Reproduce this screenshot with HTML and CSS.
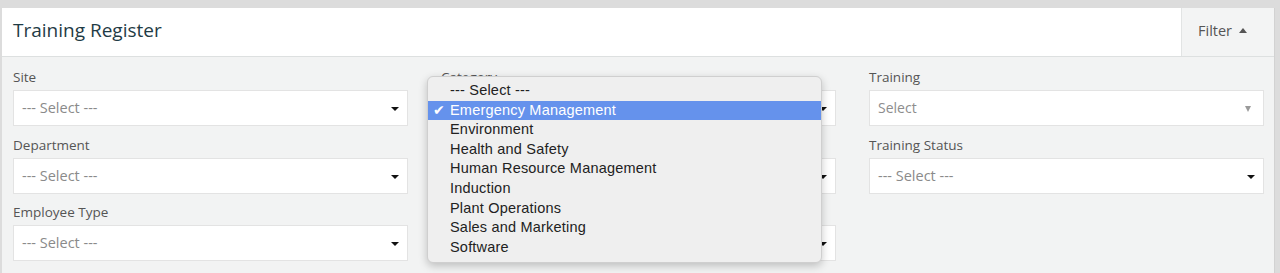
FILE: index.html
```html
<!DOCTYPE html>
<html lang="en">
<head>
    <meta charset="UTF-8">
    <title>Training Register</title>
    <link rel="stylesheet" href="styles.css">
</head>
<body>
    <div class="panel">
        <div class="panel-header">
            <h1>Training Register</h1>
            <button class="filter-toggle">Filter <span class="caret-up"></span></button>
        </div>

        <div class="panel-body">
            <div class="filter-col">
                <div class="field">
                    <label>Site</label>
                    <div class="select">--- Select ---<span class="caret"></span></div>
                </div>
                <div class="field">
                    <label>Department</label>
                    <div class="select">--- Select ---<span class="caret"></span></div>
                </div>
                <div class="field">
                    <label>Employee Type</label>
                    <div class="select">--- Select ---<span class="caret"></span></div>
                </div>
            </div>

            <div class="filter-col category-col">
                <div class="field">
                    <label>Category</label>
                    <div class="select"><span class="covered">Emergency Management</span><span class="caret"></span></div>
                </div>
                <div class="field">
                    <label class="covered">Trainer</label>
                    <div class="select"><span class="covered">--- Select ---</span><span class="caret"></span></div>
                </div>
                <div class="field">
                    <label class="covered">Provider</label>
                    <div class="select"><span class="covered">--- Select ---</span><span class="caret"></span></div>
                </div>

                <ul class="native-menu">
                    <li>--- Select ---</li>
                    <li class="checked">Emergency Management</li>
                    <li>Environment</li>
                    <li>Health and Safety</li>
                    <li>Human Resource Management</li>
                    <li>Induction</li>
                    <li>Plant Operations</li>
                    <li>Sales and Marketing</li>
                    <li>Software</li>
                </ul>
            </div>

            <div class="filter-col">
                <div class="field">
                    <label>Training</label>
                    <div class="select select2">Select<span class="caret-small"></span></div>
                </div>
                <div class="field">
                    <label>Training Status</label>
                    <div class="select">--- Select ---<span class="caret"></span></div>
                </div>
            </div>
        </div>
    </div>
</body>
</html>
```

FILE: styles.css
```css
* {
    margin: 0;
    padding: 0;
    box-sizing: border-box;
}

body {
    background: #dcdcdc;
    font-family: 'Open Sans', sans-serif;
    color: #555;
    height: 273px;
    overflow: hidden;
}

.panel {
    margin: 8px 5px 0 2px;
    background: #f2f3f3;
    height: 265px;
    border-right: 1px solid #d2d2d2;
}

.panel-header {
    background: #fff;
    height: 49px;
    border-bottom: 1px solid #dde0e0;
    display: flex;
    justify-content: space-between;
    align-items: stretch;
}

.panel-header h1 {
    font-size: 19px;
    font-weight: 400;
    color: #1f3b45;
    padding-left: 11px;
    line-height: 45px;
}

.filter-toggle {
    width: 93px;
    background: #f3f4f4;
    border: none;
    border-left: 1px solid #e2e4e4;
    font-family: 'Open Sans', sans-serif;
    font-size: 14.5px;
    color: #555;
    display: flex;
    align-items: center;
    gap: 7px;
    padding: 0 0 3px 16px;
}

.caret-up {
    width: 0;
    height: 0;
    border-left: 4px solid transparent;
    border-right: 4px solid transparent;
    border-bottom: 5px solid #555;
}

.panel-body {
    display: grid;
    grid-template-columns: repeat(3, 395px);
    column-gap: 33px;
    padding: 10px 0 0 11px;
}

.filter-col {
    position: relative;
}

.field {
    margin-bottom: 8.5px;
}

.field label {
    display: block;
    font-size: 13.5px;
    line-height: 20px;
    margin-bottom: 3px;
    color: #555;
}

.select {
    position: relative;
    height: 36px;
    background: #fff;
    border: 1px solid #e3e3e3;
    padding-left: 8px;
    font-size: 14.5px;
    line-height: 33px;
    color: #8a8a8a;
}

.covered {
    visibility: hidden;
}

.caret {
    position: absolute;
    right: 8px;
    top: 16px;
    border-left: 4px solid transparent;
    border-right: 4px solid transparent;
    border-top: 4px solid #111;
}

.select2 {
    font-size: 14px;
    color: #8d8d8d;
}

.caret-small {
    position: absolute;
    right: 12px;
    top: 15px;
    border-left: 3px solid transparent;
    border-right: 3px solid transparent;
    border-top: 6px solid #9a9a9a;
}

/* open native dropdown for Category */
.native-menu {
    position: absolute;
    left: -14px;
    top: 9px;
    width: 395px;
    height: 187px;
    list-style: none;
    background: #efefef;
    border: 1px solid #cfcfcf;
    border-radius: 6px;
    box-shadow: 0 3px 9px rgba(0,0,0,0.22);
    padding-top: 4px;
    font-family: 'Liberation Sans', Arial, sans-serif;
    font-size: 14.5px;
    letter-spacing: 0.2px;
    color: #222;
    z-index: 10;
}

.native-menu li {
    position: relative;
    height: 19.6px;
    line-height: 19.6px;
    padding-left: 22px;
}

.native-menu li.checked {
    background: #6592ec;
    color: #fff;
}

.native-menu li.checked::before {
    content: '\2714';
    position: absolute;
    left: 5px;
    font-size: 14px;
    font-family: 'DejaVu Sans', sans-serif;
}
```
